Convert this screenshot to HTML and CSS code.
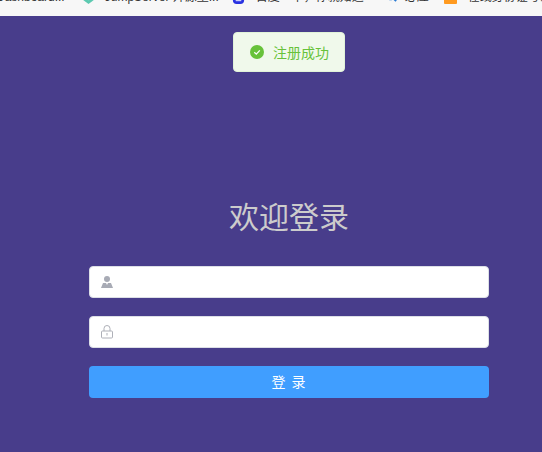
FILE: index.html
```html
<!DOCTYPE html>
<html lang="en">
<head>
<meta charset="UTF-8">
<meta name="viewport" content="width=device-width, initial-scale=1.0">
<title>登录</title>
<link rel="stylesheet" href="styles.css">
</head>
<body>

<div class="bookmarks">
    <span class="bookmark bookmark-first">Dashboard...</span>
    <span class="bookmark bookmark-jump">
        <svg class="fav" viewBox="0 0 14 14"><path d="M7 0l6 3.500v6L7 14 1 9.500v-6z" fill="#5cc9b0"/><path d="M4 5l3 2 3-2v3L7 10 4 8z" fill="#d5f3ec"/></svg>
        JumpServer 开源堡...
    </span>
    <span class="bookmark bookmark-baidu">
        <svg class="fav" viewBox="0 0 14 14"><rect x="1" width="12" height="14" rx="4" fill="#2932e1"/><rect x="4" y="8" width="6" height="3" fill="#cdd0fa"/></svg>
        百度一下，你就知道
    </span>
    <span class="bookmark bookmark-bing">
        <svg class="fav" viewBox="0 0 14 14"><circle cx="6" cy="5" r="4" fill="none" stroke="#2b7cd3" stroke-width="2"/><path d="M9 8l3 3" stroke="#2b7cd3" stroke-width="2"/></svg>
        必应
    </span>
    <span class="bookmark bookmark-id">
        <svg class="fav" viewBox="0 0 14 14"><rect width="14" height="14" rx="1" fill="#ff9a1f"/><rect x="5" width="6" height="9" fill="#fff"/></svg>
        在线身份证号码
    </span>
</div>

<div class="toast">
    <svg class="toast-icon" viewBox="0 0 14 14">
        <circle cx="7" cy="7" r="7" fill="#67c23a"/>
        <path d="M4.300 7.200l2 1.900 3.500-3.700" fill="none" stroke="#fff" stroke-width="1.300"/>
    </svg>
    <span>注册成功</span>
</div>

<div class="login">
    <h2>欢迎登录</h2>
    <form class="login-form" action="#" method="post">
        <div class="field">
            <svg class="field-icon" viewBox="0 0 14 14">
                <circle cx="7" cy="4" r="3" fill="#a8abb5"/>
                <path d="M1 13l2-5h8l2 5z" fill="#a8abb5"/>
                <path d="M6 8h2l-1 2z" fill="#fff"/>
            </svg>
            <input type="text">
        </div>
        <div class="field">
            <svg class="field-icon" viewBox="0 0 14 14">
                <rect x="1.500" y="6" width="11" height="7" rx="1" fill="none" stroke="#aeb0b8"/>
                <path d="M4 6V3.500a3 3 0 0 1 6 0V6" fill="none" stroke="#aeb0b8"/>
                <rect x="6.500" y="8" width="1" height="2.500" fill="#aeb0b8"/>
            </svg>
            <input type="password">
        </div>
        <button class="login-btn" type="button">登 录</button>
    </form>
</div>

</body>
</html>
```

FILE: styles.css
```css
/* Login page */
body {
    font-family: "Liberation Sans", "Noto Sans CJK SC", sans-serif;
    background-color: #483d8b;
    margin: 0;
    height: 452px;
    overflow: hidden;
}

.bookmarks {
    display: flex;
    align-items: flex-end;
    height: 16px;
    background-color: #f7f7f7;
    overflow: hidden;
    white-space: nowrap;
    font-size: 12px;
    color: #333;
}

.bookmark {
    display: flex;
    align-items: center;
    flex-shrink: 0;
    height: 16px;
    line-height: 16px;
    margin-bottom: 11px;
}

.bookmark-first {
    margin-left: -4px;
}

.bookmark-jump {
    gap: 10px;
    margin-left: 17px;
}

.bookmark-baidu {
    gap: 11px;
    margin-left: 13px;
}

.bookmark-bing {
    gap: 7px;
    margin-left: 21px;
}

.bookmark-id {
    gap: 11px;
    margin-left: 15px;
}

.fav {
    width: 13px;
    height: 13px;
}

.toast {
    position: absolute;
    left: 233px;
    top: 32px;
    width: 112px;
    height: 40px;
    box-sizing: border-box;
    display: flex;
    align-items: center;
    gap: 9px;
    padding-left: 16px;
    background-color: #f0f9eb;
    border: 1px solid #e1f3d8;
    border-radius: 4px;
    font-size: 14px;
    color: #67c23a;
}

.toast-icon {
    width: 14px;
    height: 14px;
    flex-shrink: 0;
}

.login {
    width: 400px;
    margin-left: 89px;
    padding-top: 180px;
}

h2 {
    margin: 0 0 24px;
    height: 46px;
    line-height: 44px;
    text-align: center;
    font-size: 30px;
    font-weight: normal;
    color: #ccc;
}

.login-form {
    display: flex;
    flex-direction: column;
    gap: 18px;
}

.field {
    position: relative;
    height: 32px;
}

.field-icon {
    position: absolute;
    left: 11px;
    top: 9px;
    width: 14px;
    height: 14px;
}

.field input {
    display: block;
    width: 100%;
    height: 100%;
    box-sizing: border-box;
    padding: 0 15px 0 30px;
    border: 1px solid #dcdfe6;
    border-radius: 4px;
    background-color: #fff;
}

.login-btn {
    height: 32px;
    padding: 0 0 3px;
    border: none;
    border-radius: 4px;
    background-color: #409eff;
    color: #fff;
    font-family: inherit;
    font-size: 14px;
    letter-spacing: 1px;
    cursor: pointer;
}
```
